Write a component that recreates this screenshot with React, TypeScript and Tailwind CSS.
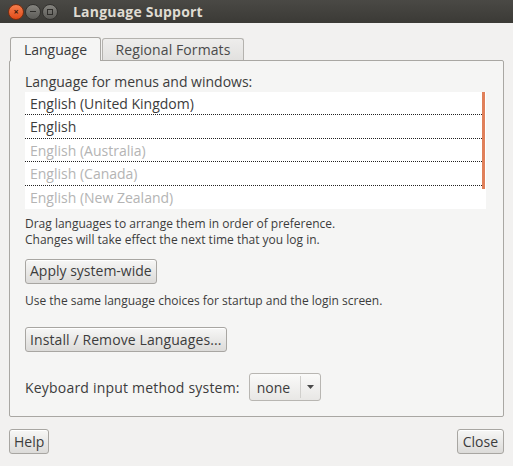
import React from 'react';

const languages = [
  { name: 'English (United Kingdom)', active: true },
  { name: 'English', active: true },
  { name: 'English (Australia)', active: false },
  { name: 'English (Canada)', active: false },
  { name: 'English (New Zealand)', active: false },
];

const btn =
  'h-[25px] px-[4px] rounded-[3px] border border-[#a8a6a2] bg-gradient-to-b from-[#f7f7f6] to-[#dcdbd9] text-[14px] text-[#3c3c3c] leading-none shadow-[inset_0_1px_0_#fff]';

const App: React.FC = () => {
  return (
    <div
      className="w-[513px] h-[466px] bg-[#f2f1f0] flex flex-col overflow-hidden"
      style={{ fontFamily: '"Open Sans", "Noto Sans", sans-serif' }}
    >
      {/* title bar */}
      <div className="h-[23px] bg-gradient-to-b from-[#4a4945] to-[#3b3a36] flex items-center pl-[8px]">
        <div className="flex items-center gap-[1px]">
          <div className="w-[16px] h-[16px] rounded-full bg-gradient-to-b from-[#f57e4c] to-[#df4a16] border border-[#7a2e10] flex items-center justify-center text-[#3a1a0a] text-[9px] font-bold leading-none">
            ×
          </div>
          <div className="w-[16px] h-[16px] rounded-full bg-gradient-to-b from-[#85847f] to-[#5c5b57] border border-[#33322f] flex items-center justify-center">
            <div className="w-[6px] h-[1px] bg-[#2e2d2a]" />
          </div>
          <div className="w-[16px] h-[16px] rounded-full bg-gradient-to-b from-[#85847f] to-[#5c5b57] border border-[#33322f] flex items-center justify-center">
            <div className="w-[6px] h-[6px] border border-[#2e2d2a]" />
          </div>
        </div>
        <span className="ml-[15px] text-[14px] font-bold text-[#dfdbd2] tracking-[0.2px]">Language Support</span>
      </div>

      {/* tabs */}
      <div className="px-[9px] pt-[13px] flex flex-col">
        <div className="flex items-end h-[24px] pl-[1px]">
          <div className="relative z-10 h-[24px] w-[91px] border border-b-0 border-[#a9a7a3] rounded-t-[3px] bg-[#f5f5f4] flex items-center justify-center text-[14px] text-[#3c3c3c] -mb-px pb-[1px]">
            Language
          </div>
          <div className="h-[22px] w-[142px] ml-[1px] border border-b-0 border-[#b4b2ae] rounded-t-[3px] bg-gradient-to-b from-[#eeedec] to-[#e2e1df] flex items-center justify-center text-[14px] text-[#4a4a4a] tracking-[0.1px]">
            Regional Formats
          </div>
        </div>

        {/* notebook page */}
        <div className="h-[357px] border border-[#a9a7a3] rounded-[2px] bg-[#f5f5f4] px-[15px] pt-[12px] flex flex-col">
          <div className="text-[14px] text-[#3c3c3c] leading-[18px]">Language for menus and windows:</div>
          <div className="mt-[1px] w-[461px] h-[117px] bg-white flex">
            <div className="flex-1 flex flex-col">
              {languages.map((l, i) => (
                <div
                  key={l.name}
                  className={`h-[24px] pl-[5px] flex items-center text-[14px] ${
                    l.active ? 'text-[#3c3c3c]' : 'text-[#b4b4b4]'
                  } ${i < languages.length - 1 ? 'border-b border-dotted border-[#222]' : ''}`}
                >
                  {l.name}
                </div>
              ))}
            </div>
            <div className="w-[3px] h-[97px] bg-[#e0805a] mr-[1px]" />
          </div>

          <div className="mt-[7px] flex flex-col gap-[1px] text-[12px] text-[#3c3c3c]">
            <span className="leading-[15px]">Drag languages to arrange them in order of preference.</span>
            <span className="leading-[15px]">Changes will take effect the next time that you log in.</span>
          </div>

          <div className="mt-[11px]">
            <button className={btn}>Apply system-wide</button>
          </div>
          <div className="mt-[9px] text-[12px] leading-[15px] text-[#3c3c3c]">
            Use the same language choices for startup and the login screen.
          </div>

          <div className="mt-[19px]">
            <button className={`${btn} tracking-[0.1px]`}>Install / Remove Languages...</button>
          </div>

          <div className="mt-[21px] flex items-center">
            <span className="text-[14px] text-[#3c3c3c] tracking-[0.2px]">Keyboard input method system:</span>
            <div className="ml-[9px] h-[28px] w-[72px] rounded-[3px] border border-[#b8b6b2] bg-gradient-to-b from-[#fafaf9] to-[#e8e7e5] flex items-center">
              <span className="flex-1 pl-[7px] text-[14px] text-[#3c3c3c]">none</span>
              <div className="w-px h-[22px] bg-[#d0cfcc]" />
              <div className="w-[19px] flex items-center justify-center">
                <svg width="7" height="4" viewBox="0 0 7 4">
                  <path d="M0 0 L7 0 L3.5 4 Z" fill="#4a4a4a" />
                </svg>
              </div>
            </div>
          </div>
        </div>
      </div>

      {/* bottom buttons */}
      <div className="px-[9px] mt-[12px] flex justify-between">
        <button className={btn}>Help</button>
        <button className={`${btn} px-[5px]`}>Close</button>
      </div>
    </div>
  );
};

export default App;
